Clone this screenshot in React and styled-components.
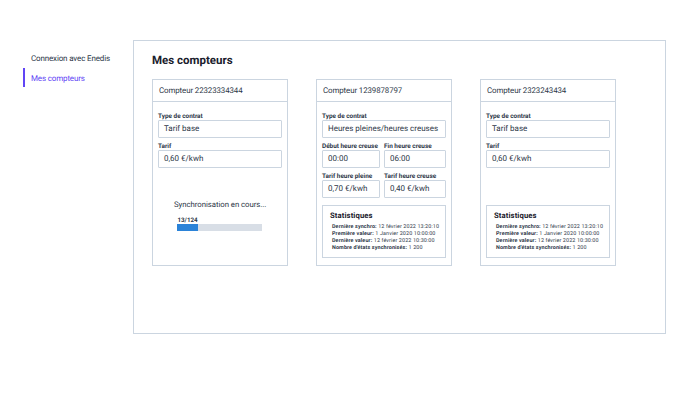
import React from "react";
import styled, { createGlobalStyle } from "styled-components";

const GlobalStyle = createGlobalStyle`
  body {
    margin: 0;
    background: #fff;
    font-family: Roboto, "Liberation Sans", sans-serif;
    color: #2d3748;
    text-rendering: geometricPrecision;
  }
`;

const Page = styled.div`
  width: 690px;
  height: 402px;
  display: flex;
  align-items: flex-start;
  padding: 40px 0 0 23px;
  box-sizing: border-box;
`;

const Sidebar = styled.nav`
  width: 110px;
  flex-shrink: 0;
  padding-top: 8px;
  display: flex;
  flex-direction: column;
`;

const NavItem = styled.div`
  height: 19.5px;
  line-height: 21px;
  padding-left: 6px;
  font-size: 8px;
  letter-spacing: -0.15px;
  color: ${p => (p.$active ? "#6145f5" : "#2d3748")};
  border-left: 2px solid ${p => (p.$active ? "#6145f5" : "transparent")};
`;

const Main = styled.main`
  width: 533px;
  height: 294px;
  box-sizing: border-box;
  border: 1px solid #cbd5e0;
  padding: 12px 18px;
`;

const Title = styled.h1`
  margin: 0 0 11px;
  font-size: 11.5px;
  line-height: 15px;
  font-weight: 700;
  color: #1a202c;
`;

const Cards = styled.div`
  display: flex;
  gap: 28px;
`;

const Card = styled.section`
  width: 136px;
  height: 187px;
  box-sizing: border-box;
  border: 1px solid #cbd5e0;
  display: flex;
  flex-direction: column;
`;

const CardHeader = styled.header`
  height: 22px;
  flex-shrink: 0;
  box-sizing: border-box;
  border-bottom: 1px solid #cbd5e0;
  padding-left: 6px;
  font-size: 7.9px;
  line-height: 22px;
  letter-spacing: -0.1px;
`;

const CardBody = styled.div`
  flex: 1;
  display: flex;
  flex-direction: column;
  padding: 10px 5px 7px;
`;

const Row = styled.div`
  display: grid;
  grid-template-columns: ${p => (p.$split ? "58px 62px" : "1fr")};
  gap: 4px;
`;

const Field = styled.div`
  margin-bottom: 4px;
`;

const Label = styled.div`
  font-size: 6.4px;
  line-height: 8px;
  font-weight: 700;
  color: #2d3748;
  white-space: nowrap;
`;

const Value = styled.div`
  height: 18px;
  box-sizing: border-box;
  border: 1px solid #cbd5e0;
  border-radius: 1px;
  padding-left: 5px;
  font-size: 8px;
  line-height: 16px;
  white-space: nowrap;
`;

const Sync = styled.div`
  margin-top: 28px;
`;

const SyncText = styled.div`
  font-size: 7.8px;
  line-height: 10px;
  letter-spacing: -0.05px;
  padding-left: 16px;
`;

const Count = styled.div`
  margin-top: 6px;
  font-size: 6.2px;
  line-height: 8px;
  font-weight: 700;
  padding-left: 19.5px;
`;

const Track = styled.div`
  width: 85px;
  height: 7px;
  margin-left: 19px;
  background: #d8dee6;
`;

const Fill = styled.div`
  height: 100%;
  background: #2b83d8;
`;

const Stats = styled.div`
  margin-top: auto;
  height: 53px;
  box-sizing: border-box;
  border: 1px solid #cbd5e0;
  padding: 5px 7px;
`;

const StatsTitle = styled.div`
  font-size: 7.7px;
  line-height: 10px;
  font-weight: 700;
  letter-spacing: 0.1px;
  color: #1a202c;
  margin-bottom: 3px;
`;

const StatsLine = styled.div`
  font-size: 5.4px;
  line-height: 7px;
  padding-left: 2px;
  white-space: nowrap;
  letter-spacing: 0.12px;
  b {
    font-weight: 700;
  }
`;

const Statistics = () => (
  <Stats>
    <StatsTitle>Statistiques</StatsTitle>
    <StatsLine><b>Dernière synchro:</b> 12 février 2022 13:20:10</StatsLine>
    <StatsLine><b>Première valeur:</b> 1 Janvier 2020 10:00:00</StatsLine>
    <StatsLine><b>Dernière valeur:</b> 12 février 2022 10:30:00</StatsLine>
    <StatsLine><b>Nombre d'états synchronisés:</b> 1 200</StatsLine>
  </Stats>
);

const TextField = ({ label, value }) => (
  <Field>
    <Label>{label}</Label>
    <Value>{value}</Value>
  </Field>
);

export default function App() {
  return (
    <>
      <GlobalStyle />
      <Page>
        <Sidebar>
          <NavItem>Connexion avec Enedis</NavItem>
          <NavItem $active>Mes compteurs</NavItem>
        </Sidebar>
        <Main>
          <Title>Mes compteurs</Title>
          <Cards>
            <Card>
              <CardHeader>Compteur 22323334344</CardHeader>
              <CardBody>
                <TextField label="Type de contrat" value="Tarif base" />
                <TextField label="Tarif" value="0,60 €/kwh" />
                <Sync>
                  <SyncText>Synchronisation en cours...</SyncText>
                  <Count>13/124</Count>
                  <Track>
                    <Fill style={{ width: "25%" }} />
                  </Track>
                </Sync>
              </CardBody>
            </Card>
            <Card>
              <CardHeader>Compteur 1239878797</CardHeader>
              <CardBody>
                <TextField label="Type de contrat" value="Heures pleines/heures creuses" />
                <Row $split>
                  <TextField label="Début heure creuse" value="00:00" />
                  <TextField label="Fin heure creuse" value="06:00" />
                </Row>
                <Row $split>
                  <TextField label="Tarif heure pleine" value="0,70 €/kwh" />
                  <TextField label="Tarif heure creuse" value="0,40 €/kwh" />
                </Row>
                <Statistics />
              </CardBody>
            </Card>
            <Card>
              <CardHeader>Compteur 2323243434</CardHeader>
              <CardBody>
                <TextField label="Type de contrat" value="Tarif base" />
                <TextField label="Tarif" value="0,60 €/kwh" />
                <Statistics />
              </CardBody>
            </Card>
          </Cards>
        </Main>
      </Page>
    </>
  );
}
